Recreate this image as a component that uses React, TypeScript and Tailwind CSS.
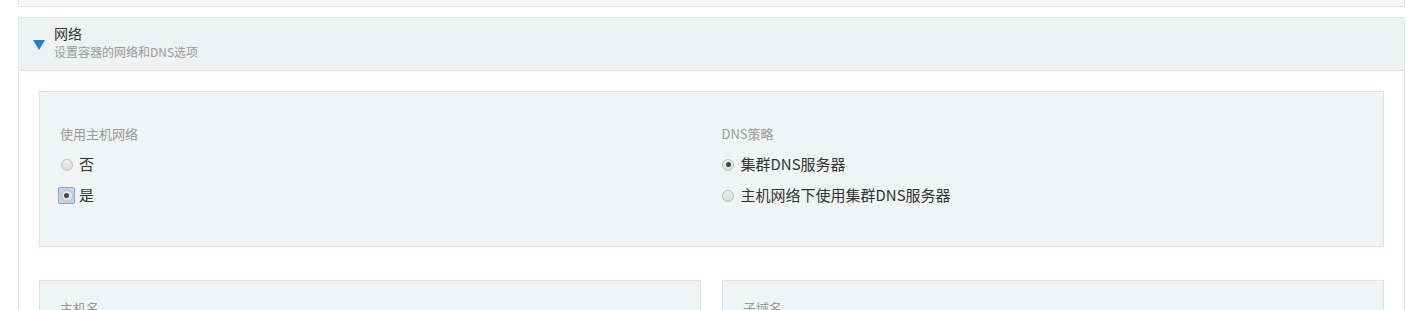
import React from "react";

const font = { fontFamily: '"Noto Sans CJK SC", "Liberation Sans", sans-serif' };

function Radio({ checked, focused, label }: { checked?: boolean; focused?: boolean; label: string }) {
  return (
    <label className="flex items-center h-[31px] text-[15px] text-[#333]">
      <span className="w-[13px] h-[13px] flex items-center justify-center mr-[6px] relative">
        {focused && (
          <span className="absolute -inset-[2px] bg-[#c9d3ef] border border-[#8fa2d8] rounded-[2px]" />
        )}
        <span className="relative w-[12px] h-[12px] rounded-full border border-[#b9bcbd] bg-gradient-to-b from-[#f2f2f2] to-[#dcdcdc] flex items-center justify-center">
          {checked && <span className="w-[5px] h-[5px] rounded-full bg-[#444]" />}
        </span>
      </span>
      {label}
    </label>
  );
}

export default function App() {
  return (
    <div className="w-[1417px] h-[310px] overflow-hidden bg-white" style={font}>
      <div className="ml-[18px] mr-[12px]">
        {/* previous section tail */}
        <div className="h-[7px] bg-[#f6f7f7] border-x border-b border-[#e2e4e4]" />

        {/* network section */}
        <div className="mt-[10px] border border-[#e2e4e4] h-[400px]">
          <div className="h-[53px] bg-[#eff2f3] border-b border-[#dfe3e4] flex items-center pl-[14px]">
            <svg width="12" height="10" viewBox="0 0 12 10" className="mt-[2px]">
              <path d="M0 0 L12 0 L6 10 Z" fill="#2b7bc5" />
            </svg>
            <div className="ml-[9px] -mt-[3px]">
              <div className="text-[14px] leading-[18px] text-[#333] -mt-[2px]">网络</div>
              <div className="text-[12px] leading-[16px] text-[#999] mt-[2px]">设置容器的网络和DNS选项</div>
            </div>
          </div>

          <div className="px-[20px] pt-[20px]">
            <div className="h-[156px] bg-[#f1f4f4] border border-[#dde1e2] px-5 pt-[33px]">
              <div className="grid grid-cols-2 gap-5">
                <div>
                  <div className="text-[13px] leading-[18px] text-[#999] mb-[6px]">使用主机网络</div>
                  <Radio label="否" />
                  <Radio label="是" checked focused />
                </div>
                <div>
                  <div className="text-[13px] leading-[18px] text-[#999] mb-[6px]">DNS策略</div>
                  <Radio label="集群DNS服务器" checked />
                  <Radio label="主机网络下使用集群DNS服务器" />
                </div>
              </div>
            </div>

            <div className="grid grid-cols-2 gap-[21px] mt-[33px]">
              <div className="h-[120px] bg-[#f1f4f4] border border-[#dde1e2] px-5 pt-[18px]">
                <div className="text-[13px] leading-[18px] text-[#999]">主机名</div>
              </div>
              <div className="h-[120px] bg-[#f1f4f4] border border-[#dde1e2] px-5 pt-[18px]">
                <div className="text-[13px] leading-[18px] text-[#999]">子域名</div>
              </div>
            </div>
          </div>
        </div>
      </div>
    </div>
  );
}
